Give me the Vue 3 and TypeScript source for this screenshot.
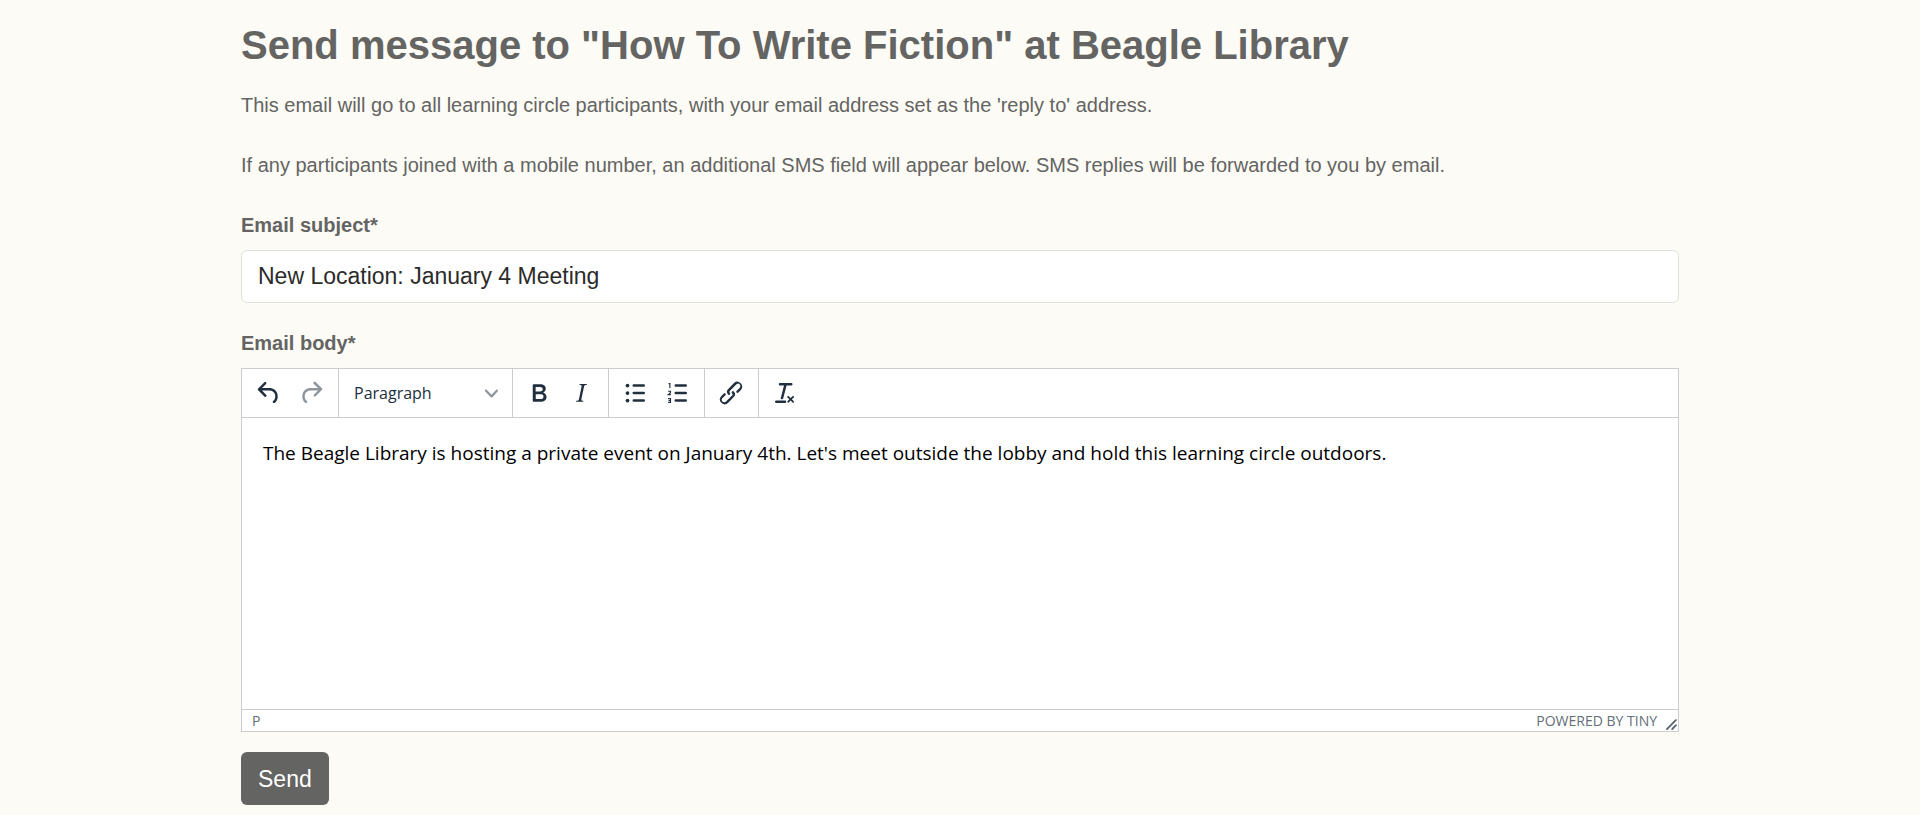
<script setup lang="ts">
import { ref } from 'vue'

const subject = ref('New Location: January 4 Meeting')
const body = ref(
  "The Beagle Library is hosting a private event on January 4th. Let's meet outside the lobby and hold this learning circle outdoors."
)
const blockFormat = ref('Paragraph')
const blockFormats: string[] = ['Paragraph', 'Heading 1', 'Heading 2', 'Heading 3']
</script>

<template>
  <main class="page">
    <h1>Send message to "How To Write Fiction" at Beagle Library</h1>
    <p>This email will go to all learning circle participants, with your email address set as the 'reply to' address.</p>
    <p>If any participants joined with a mobile number, an additional SMS field will appear below. SMS replies will be forwarded to you by email.</p>

    <form @submit.prevent>
      <div class="field">
        <label for="subject">Email subject*</label>
        <input id="subject" v-model="subject" class="subject" type="text" required />
      </div>

      <div class="field">
        <label for="body">Email body*</label>
        <div class="editor">
          <div class="toolbar" role="toolbar" aria-label="Formatting">
            <div class="group">
              <button type="button" class="tool" aria-label="Undo">
                <svg viewBox="0 0 24 24"><path d="M6.4 8H12c3.7 0 6.2 2 6.8 5.1.6 2.7-.4 5.6-2.3 6.8a1 1 0 0 1-1-1.8c1.1-.6 1.8-2.7 1.4-4.6-.5-2.1-2.1-3.5-4.9-3.5H6.4l3.3 3.3a1 1 0 1 1-1.4 1.4l-5-5a1 1 0 0 1 0-1.4l5-5a1 1 0 0 1 1.4 1.4L6.4 8z" /></svg>
              </button>
              <button type="button" class="tool" aria-label="Redo" disabled>
                <svg viewBox="0 0 24 24"><path d="M17.6 10H12c-2.8 0-4.4 1.4-4.9 3.5-.4 2 .3 4 1.4 4.6a1 1 0 1 1-1 1.8c-2-1.2-2.9-4.1-2.3-6.8.6-3 3-5.1 6.8-5.1h5.6l-3.3-3.3a1 1 0 1 1 1.4-1.4l5 5a1 1 0 0 1 0 1.4l-5 5a1 1 0 0 1-1.4-1.4l3.3-3.3z" /></svg>
              </button>
            </div>
            <div class="group format">
              <select v-model="blockFormat" aria-label="Block format">
                <option v-for="name in blockFormats" :key="name">{{ name }}</option>
              </select>
              <svg class="chevron" viewBox="0 0 10 10"><path d="M8.7 2.2c.3-.3.8-.3 1 0 .4.4.4.9 0 1.2L5.7 7.8c-.3.3-.9.3-1.2 0L.2 3.4a.8.8 0 0 1 0-1.2c.3-.3.8-.3 1.1 0L5 6l3.7-3.8z" /></svg>
            </div>
            <div class="group">
              <button type="button" class="tool" aria-label="Bold">
                <svg viewBox="0 0 24 24"><path d="M7.8 19c-.3 0-.5 0-.6-.2l-.2-.5V5.7c0-.2 0-.4.2-.5l.6-.2h5c1.5 0 2.7.3 3.5 1 .7.6 1.1 1.4 1.1 2.5a3 3 0 0 1-.6 1.9c-.4.6-1 1-1.6 1.2.4.1.9.3 1.3.6s.8.7 1 1.2c.4.4.5 1 .5 1.6 0 1.3-.4 2.3-1.3 3-.8.7-2.1 1-3.8 1H7.8zm5-8.3c.6 0 1.2-.1 1.6-.5.4-.3.6-.7.6-1.3 0-1.1-.8-1.7-2.3-1.7H9.3v3.5h3.4zm.5 6c.7 0 1.3-.1 1.7-.4.4-.4.6-.9.6-1.5s-.2-1-.7-1.4c-.4-.3-1-.4-2-.4H9.4v3.8h4z" /></svg>
              </button>
              <button type="button" class="tool" aria-label="Italic">
                <svg viewBox="0 0 24 24"><path d="M16.7 4.7l-.1.9h-.3c-.6 0-1 0-1.4.3-.3.3-.4.6-.5 1.1l-2.1 9.8v.6c0 .5.4.8 1.4.8h.2l-.2.8H8l.2-.8h.2c1.1 0 1.8-.5 2-1.5l2-9.8.1-.5c0-.6-.4-.8-1.4-.8h-.3l.2-.9h5.8z" /></svg>
              </button>
            </div>
            <div class="group">
              <button type="button" class="tool" aria-label="Bullet list">
                <svg viewBox="0 0 24 24">
                  <path d="M11 5h8a1 1 0 0 1 0 2h-8a1 1 0 0 1 0-2zm0 6h8a1 1 0 0 1 0 2h-8a1 1 0 0 1 0-2zm0 6h8a1 1 0 0 1 0 2h-8a1 1 0 0 1 0-2z" />
                  <circle cx="6" cy="6" r="1.5" /><circle cx="6" cy="12" r="1.5" /><circle cx="6" cy="18" r="1.5" />
                </svg>
              </button>
              <button type="button" class="tool" aria-label="Numbered list">
                <svg viewBox="0 0 24 24">
                  <path d="M11 5h8a1 1 0 0 1 0 2h-8a1 1 0 0 1 0-2zm0 6h8a1 1 0 0 1 0 2h-8a1 1 0 0 1 0-2zm0 6h8a1 1 0 0 1 0 2h-8a1 1 0 0 1 0-2z" />
                  <path class="line" d="M5.2 4.500H6.300V8M4.900 10.600H6.800V11.700L5 13.300H7.100M4.900 16.500H6.800V19.500H4.900M5.200 18H6.800" />
                </svg>
              </button>
            </div>
            <div class="group">
              <button type="button" class="tool" aria-label="Insert link">
                <svg viewBox="0 0 24 24"><path d="M6.2 12.3a1 1 0 0 1 1.4 1.4l-2.1 2a2 2 0 1 0 2.7 2.8l4.8-4.8a1 1 0 0 0 0-1.4 1 1 0 1 1 1.4-1.3 2.9 2.9 0 0 1 0 4L9.6 20a3.9 3.9 0 0 1-5.5-5.5l2-2zm11.6-.6a1 1 0 0 1-1.4-1.4l2-2a2 2 0 1 0-2.6-2.8L11 10.3a1 1 0 0 0 0 1.4A1 1 0 1 1 9.6 13a2.9 2.9 0 0 1 0-4L14.4 4a3.9 3.9 0 0 1 5.5 5.5l-2 2z" /></svg>
              </button>
            </div>
            <div class="group">
              <button type="button" class="tool" aria-label="Clear formatting">
                <svg viewBox="0 0 24 24"><path d="M13.2 6a1 1 0 0 1 0 .2l-2.6 10a1 1 0 0 1-1 .8h-.2a.8.8 0 0 1-.8-1l2.6-10H8a1 1 0 1 1 0-2h9a1 1 0 0 1 0 2h-3.8zM5 18h7a1 1 0 0 1 0 2H5a1 1 0 0 1 0-2zm13 1.500L16.500 18 15 19.500a.7.7 0 0 1-1-1l1.500-1.500-1.500-1.500a.7.7 0 0 1 1-1l1.500 1.500 1.500-1.500a.7.7 0 0 1 1 1L17.500 17l1.500 1.500a.7.7 0 0 1-1 1z" /></svg>
              </button>
            </div>
          </div>
          <textarea id="body" v-model="body" class="content" spellcheck="false"></textarea>
          <div class="statusbar">
            <span class="path">P</span>
            <a href="#" class="brand">POWERED BY TINY</a>
            <svg class="resize" viewBox="0 0 10 10"><path d="M8.1 1.1A.5.5 0 1 1 9 2l-7 7A.5.5 0 1 1 1 8l7-7zM8.1 5.1A.5.5 0 1 1 9 6l-3 3A.5.5 0 1 1 5 8l3-3z" /></svg>
          </div>
        </div>
      </div>

      <button type="submit" class="send">Send</button>
    </form>
  </main>
</template>

<style>
body {
  margin: 0;
  background: #fcfbf6;
}
</style>

<style scoped>
* {
  box-sizing: border-box;
}

.page {
  max-width: 1438px;
  margin: 0 auto;
  padding: 21px 0 10px;
  color: #646462;
  font: 20px/30px "Liberation Sans", Arial, sans-serif;
}

h1 {
  margin: 0 0 21px;
  font-size: 40px;
  line-height: 48px;
}

p {
  margin: 0 0 30px;
}

.field {
  display: flex;
  flex-direction: column;
  gap: 10px;
  margin-bottom: 25px;
}

.field + .field {
  margin-bottom: 20px;
}

label {
  font-weight: bold;
}

.subject {
  width: 100%;
  height: 53px;
  padding: 0 16px;
  border: 1px solid #e0e0db;
  border-radius: 6px;
  background: #fff;
  color: #2b2b2a;
  font: 23px/36px "Liberation Sans", Arial, sans-serif;
}

.editor {
  display: flex;
  flex-direction: column;
  border: 1px solid #ccc;
  background: #fff;
  font-family: "Open Sans", "Noto Sans", sans-serif;
}

.toolbar {
  display: flex;
  height: 49px;
  border-bottom: 1px solid #ccc;
}

.group {
  display: flex;
  align-items: center;
  padding: 0 6px 0 5px;
  border-right: 1px solid #ccc;
}

.group:first-child {
  padding-left: 6px;
}

.group:last-child {
  border-right: 0;
}

.tool {
  display: flex;
  align-items: center;
  justify-content: center;
  width: 42px;
  height: 42px;
  padding: 0;
  border: 0;
  background: none;
}

.tool svg {
  width: 30px;
  height: 30px;
  fill: #222f3e;
}

.tool:disabled svg {
  opacity: 0.5;
}

.line {
  fill: none;
  stroke: #222f3e;
  stroke-width: 0.9;
}

.format {
  position: relative;
  width: 174px;
}

select {
  width: 100%;
  height: 42px;
  padding: 0 30px 0 10px;
  border: 0;
  appearance: none;
  background: none;
  color: #222f3e;
  font: 16px "Open Sans", "Noto Sans", sans-serif;
}

.chevron {
  position: absolute;
  right: 14px;
  width: 13px;
  height: 13px;
  fill: #222f3e;
  opacity: 0.5;
  pointer-events: none;
}

.content {
  display: block;
  width: 100%;
  height: 291px;
  padding: 21px;
  border: 0;
  outline: 0;
  resize: none;
  background: #fff;
  color: #000;
  font: 19px/28px "Open Sans", "Noto Sans", sans-serif;
}

.statusbar {
  display: flex;
  align-items: center;
  height: 22px;
  padding: 0 0 0 10px;
  border-top: 1px solid #ccc;
  color: #646d78;
  font-size: 14px;
  line-height: 20px;
}

.path {
  flex: 1;
}

.brand {
  color: inherit;
  text-decoration: none;
}

.resize {
  align-self: flex-end;
  width: 13px;
  height: 13px;
  margin-left: 8px;
  fill: #5a6370;
}

.send {
  display: block;
  height: 53px;
  padding: 0 17px;
  border: 0;
  border-radius: 6px;
  background: #646462;
  color: #fff;
  font: 23px/36px "Liberation Sans", Arial, sans-serif;
}
</style>
